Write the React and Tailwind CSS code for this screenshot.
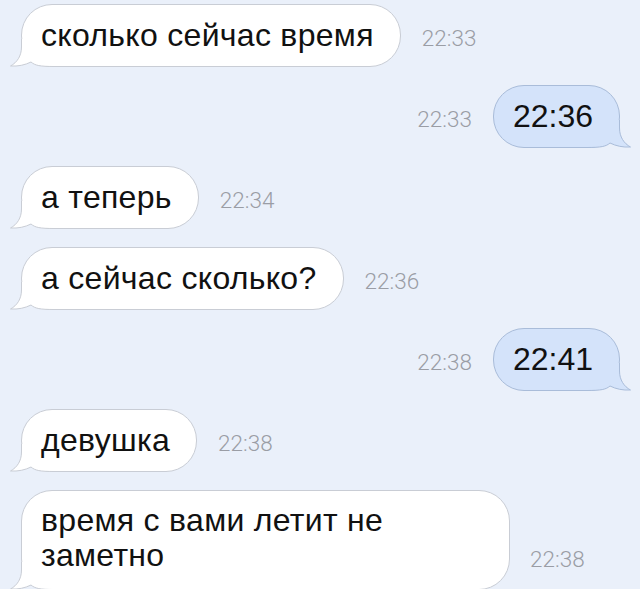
import React from 'react';

const messages = [
  { id: 1, side: 'in', text: 'сколько сейчас время', time: '22:33' },
  { id: 2, side: 'out', text: '22:36', time: '22:33' },
  { id: 3, side: 'in', text: 'а теперь', time: '22:34' },
  { id: 4, side: 'in', text: 'а сейчас сколько?', time: '22:36' },
  { id: 5, side: 'out', text: '22:41', time: '22:38' },
  { id: 6, side: 'in', text: 'девушка', time: '22:38' },
  { id: 7, side: 'in', text: 'время с вами летит не заметно', time: '22:38', wide: true },
];

const TAIL = 'M11.5 0 L11.5 8 C11.5 17 7 23.5 0.5 27 C8 27.5 15 26 21 23 C25 26.5 30 27.5 44 27.5';

function Tail({ side }) {
  const out = side === 'out';
  return (
    <svg
      width="44"
      height="28"
      viewBox="0 0 44 28"
      className={out ? 'absolute -right-[12px] -bottom-[1px] -scale-x-100' : 'absolute -left-[12px] -bottom-[1px]'}
    >
      <path d={TAIL + ' L44 0 Z'} fill={out ? '#d4e3fa' : '#ffffff'} />
      <path d={TAIL} fill="none" stroke={out ? '#a9bcd9' : '#c9cdd5'} strokeWidth="1" />
    </svg>
  );
}

function Time({ children, className = '' }) {
  return (
    <span
      className={'text-[22.5px] leading-[26px] font-light text-[#9a9da5] ' + className}
      style={{ fontFamily: 'Roboto, "Liberation Sans", sans-serif' }}
    >
      {children}
    </span>
  );
}

function Bubble({ msg }) {
  const out = msg.side === 'out';
  return (
    <div
      className={
        'relative border rounded-[31px] pl-[19px] pr-[26px] py-[13px] text-[32px] leading-[35px] text-[#111111] ' +
        (out ? 'bg-[#d4e3fa] border-[#a9bcd9]' : 'bg-white border-[#c9cdd5] tracking-[0.3px]') +
        (msg.wide ? ' w-[489px] pt-[12px] pb-[16px]' : '')
      }
    >
      <Tail side={msg.side} />
      <span className="relative">{msg.text}</span>
    </div>
  );
}

export default function App() {
  return (
    <div
      className="w-[640px] h-[589px] overflow-hidden bg-[#eaf0fa] flex flex-col gap-[18px] pt-[4px]"
      style={{ fontFamily: '"Liberation Sans", Arial, sans-serif' }}
    >
      {messages.map((msg) =>
        msg.side === 'out' ? (
          <div key={msg.id} className="flex items-center justify-end pr-[20px]">
            <Time className="mr-[21px] pt-[4px]">{msg.time}</Time>
            <Bubble msg={msg} />
          </div>
        ) : (
          <div key={msg.id} className={'flex pl-[21px] ' + (msg.wide ? 'items-end' : 'items-center')}>
            <Bubble msg={msg} />
            <Time className={msg.wide ? 'ml-[20px] mb-[18px]' : 'ml-[21px] pt-[4px]'}>{msg.time}</Time>
          </div>
        )
      )}
    </div>
  );
}
